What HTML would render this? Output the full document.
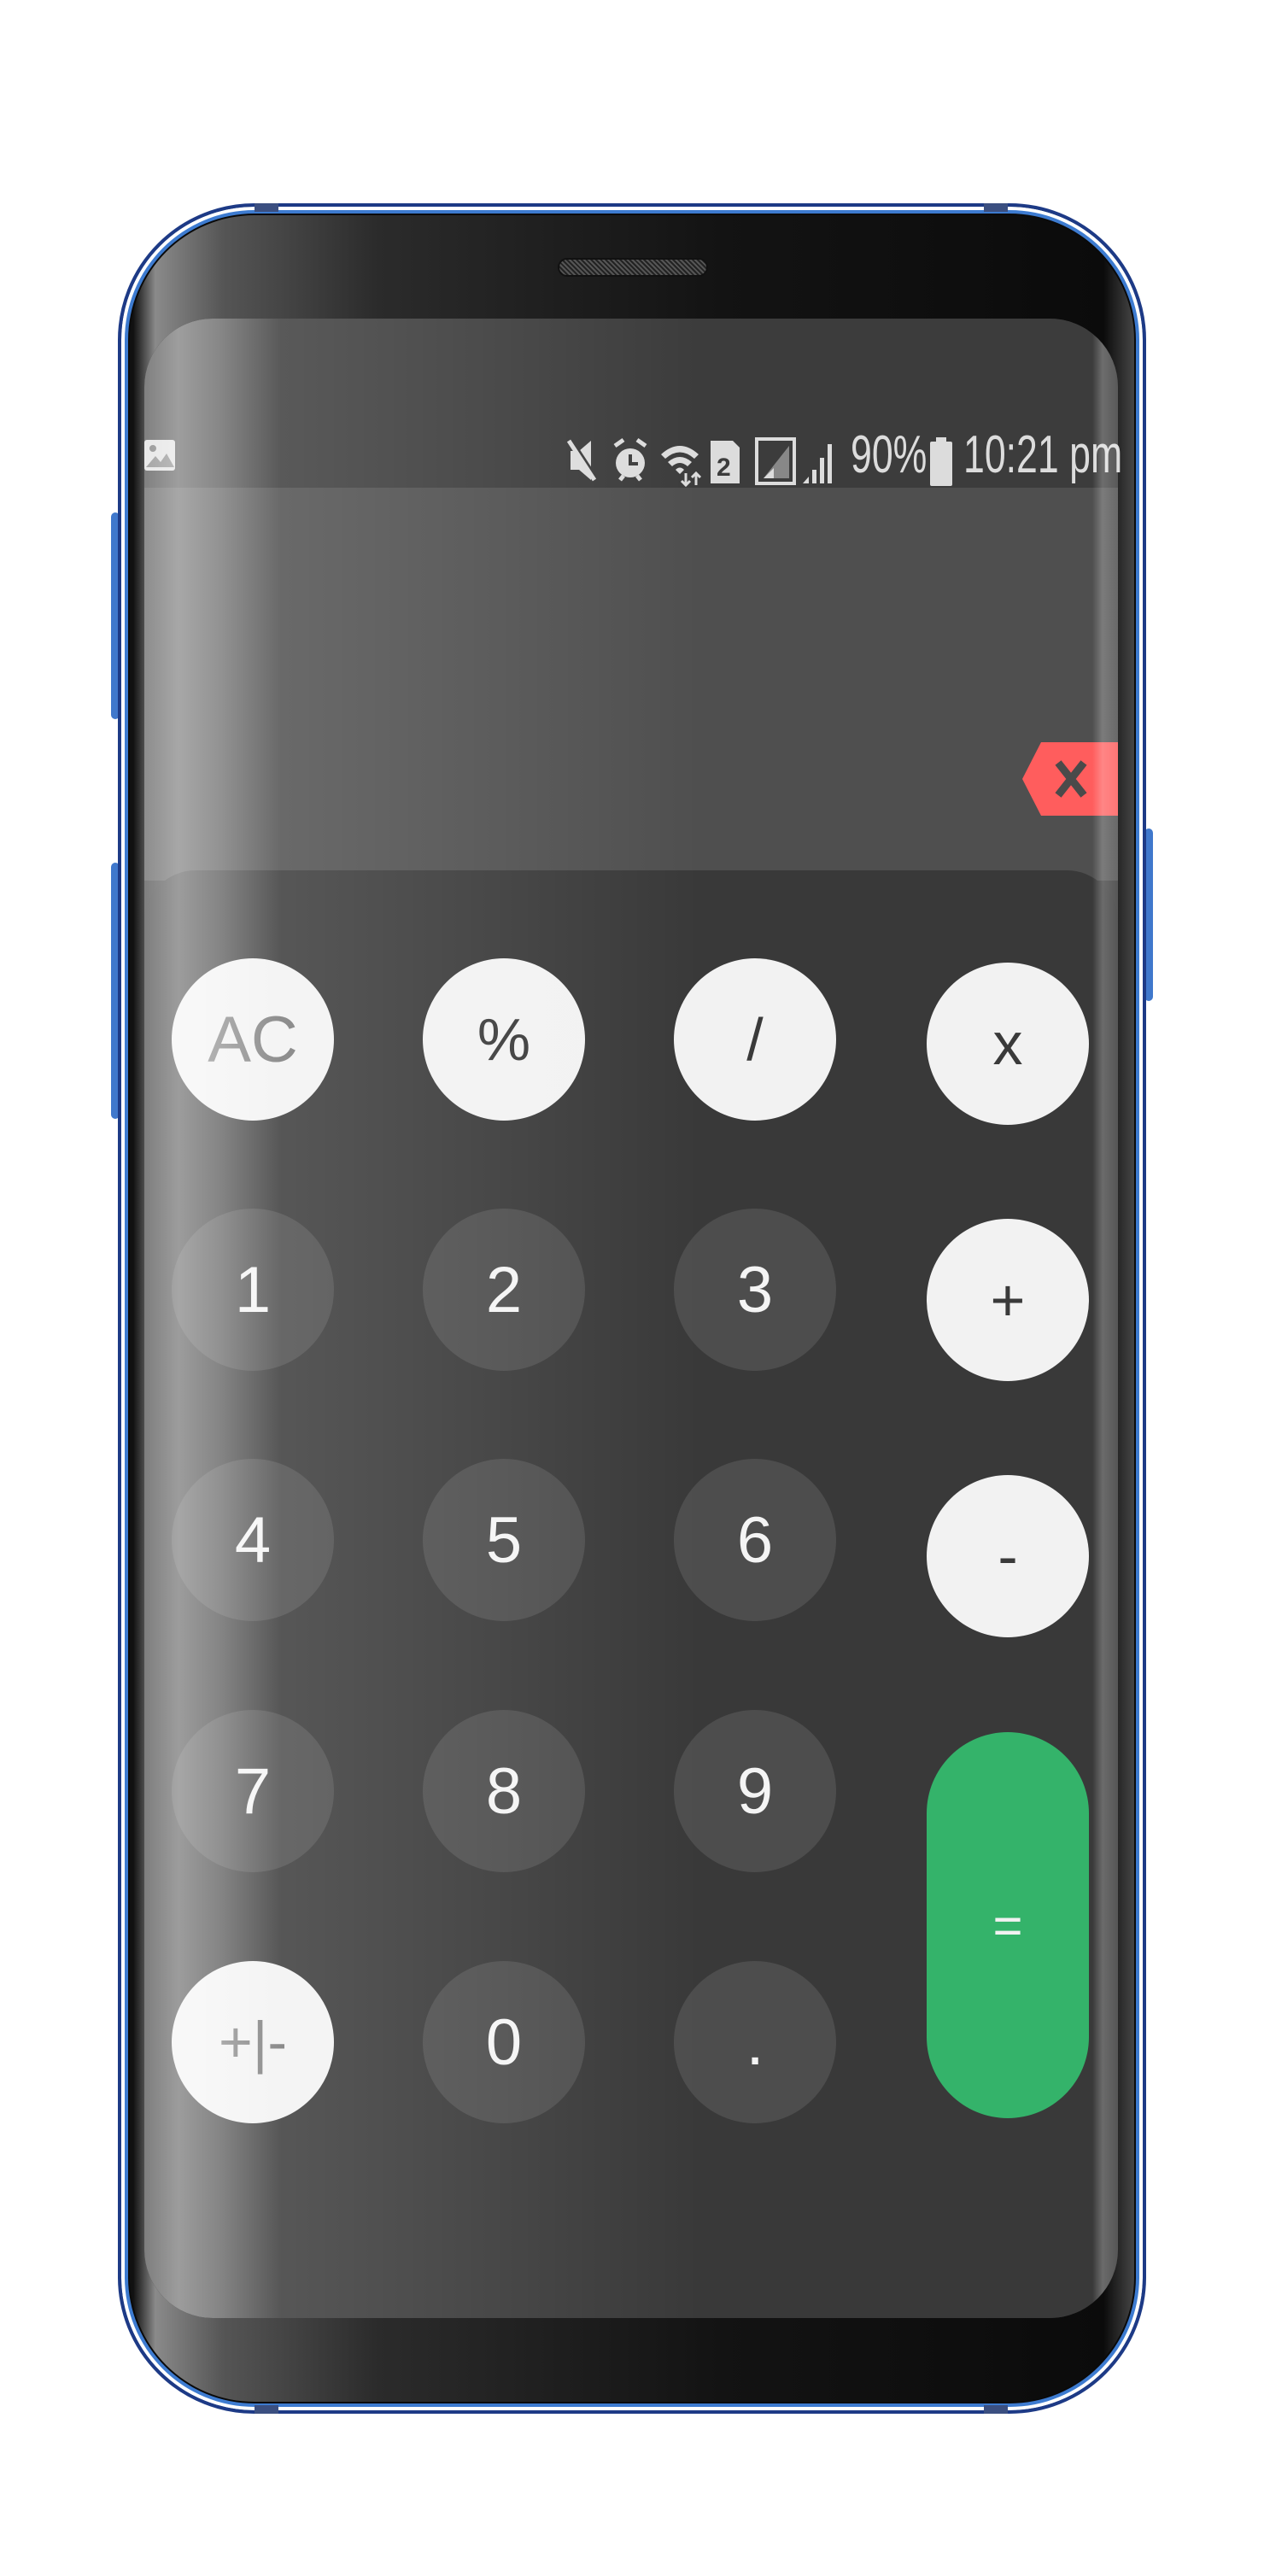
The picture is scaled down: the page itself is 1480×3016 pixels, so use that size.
<!DOCTYPE html>
<html><head><meta charset="utf-8"><style>
*{margin:0;padding:0;box-sizing:border-box}
body{width:1480px;height:3016px;background:#fff;position:relative;overflow:hidden;font-family:"Liberation Sans",sans-serif}
.abs{position:absolute}
.phone{left:138px;top:238px;width:1204px;height:2588px;border-radius:160px;border:4px solid #1d3a86;
 box-shadow:inset 0 0 0 4px #fff,inset 0 0 0 8px #3d7bd0,inset 0 0 0 10px #0a0a0a;
 background:linear-gradient(to right,#111 0,#111 14px,#8a8a8a 40px,#555 120px,#2b2b2b 300px,#131313 700px,#0b0b0b 1150px,#444 1185px,#050505 1200px)}
.side{background:#3f78cc;border-radius:6px}
.cap{background:#3b4f80}
.screen{left:169px;top:373px;width:1140px;height:2341px;border-radius:80px;overflow:hidden;background:#3a3a3a}
.status{left:0;top:0;width:1140px;height:198px;background:#3c3c3c}
.display{left:0;top:198px;width:1140px;height:460px;background:#4f4f4f}
.pad{left:0;top:646px;width:1140px;height:1700px;background:#393939;border-radius:60px 60px 0 0}
.ov{left:0;top:0;width:1140px;height:2341px;pointer-events:none;
 background:linear-gradient(to right,rgba(255,255,255,.35) 0,rgba(255,255,255,.5) 40px,rgba(255,255,255,.38) 90px,rgba(255,255,255,.15) 160px,rgba(255,255,255,.08) 400px,rgba(255,255,255,0) 650px,rgba(255,255,255,0) 1110px,rgba(255,255,255,.25) 1122px,rgba(255,255,255,.15) 1140px)}
.b{position:absolute;width:190px;height:190px;border-radius:50%;display:flex;align-items:center;justify-content:center;font-size:76px;color:#f4f4f4}
.n{background:rgba(255,255,255,.1)}
.w{background:#f2f2f2;color:#3a3a3a;font-size:70px}
.st{color:#dcdcdc;font-size:62px;line-height:62px;top:502px;transform:scaleX(.72);transform-origin:left;white-space:nowrap}
</style></head><body>
<div class="abs side" style="left:130px;top:600px;width:10px;height:242px"></div>
<div class="abs side" style="left:130px;top:1010px;width:10px;height:300px"></div>
<div class="abs side" style="left:1340px;top:970px;width:10px;height:202px"></div>
<div class="abs phone"></div>
<div class="abs cap" style="left:298px;top:238px;width:28px;height:10px"></div>
<div class="abs cap" style="left:1152px;top:238px;width:28px;height:10px"></div>
<div class="abs cap" style="left:298px;top:2816px;width:28px;height:10px"></div>
<div class="abs cap" style="left:1152px;top:2816px;width:28px;height:10px"></div>
<div class="abs" style="left:653px;top:302px;width:176px;height:22px;border-radius:11px;background:repeating-linear-gradient(45deg,#555 0 2px,#222 2px 4px);border:2px solid #111"></div>

<div class="abs screen">
 <div class="abs status"></div>
 <div class="abs display"></div>
 <div class="abs pad"></div>
 <svg class="abs" style="left:1028px;top:496px" width="112" height="86" viewBox="0 0 112 86"><path d="M22 0H112V86H22L0 43Z" fill="#ff5d5d"/><path d="M42 24L72 62M72 24L42 62" stroke="#4a4a4a" stroke-width="9"/></svg>
</div>

<!-- status bar -->
<svg class="abs" style="left:168px;top:514px" width="38" height="38" viewBox="0 0 38 38"><rect x="1" y="1" width="36" height="36" rx="3" fill="#ddd"/><circle cx="11" cy="11" r="4" fill="#666"/><path d="M3 33L14 20L20 27L27 17L36 33Z" fill="#777"/></svg>
<svg class="abs" style="left:660px;top:510px" width="322" height="60" viewBox="0 0 322 60">
 <g fill="#dcdcdc">
 <path d="M8 18H18L32 6V52L18 40H8Z"/><path d="M8 6L38 52" stroke="#3c3c3c" stroke-width="7"/><path d="M6 6L36 52" stroke="#dcdcdc" stroke-width="5"/>
 <circle cx="78" cy="32" r="17"/><path d="M60 12L70 5M96 12L86 5M66 52L70 47M90 52L86 47" stroke="#dcdcdc" stroke-width="5"/><path d="M78 22V33H87" stroke="#3c3c3c" stroke-width="4" fill="none"/>
 <path d="M114 22Q136 2 158 22L153 27Q136 12 119 27ZM122 31Q136 19 150 31L145 36Q136 28 127 36ZM131 40Q136 35 141 40L136 45Z"/>
 <path d="M143 44V58M138 53L143 58L148 53M155 58V44M150 49L155 44L160 49" stroke="#dcdcdc" stroke-width="3" fill="none"/>
 <path d="M172 6H198L206 14V56H172Z"/><text x="179" y="47" font-family="Liberation Sans" font-weight="bold" font-size="30" fill="#3c3c3c">2</text>
 <path d="M226 4H270V56H226Z" fill="none" stroke="#dcdcdc" stroke-width="4"/><path d="M234 50L264 12V50Z" fill="#888"/><path d="M234 50L246 38V50Z" fill="#dcdcdc"/>
 <path d="M280 56L287 48V56ZM291 56V40H296V56ZM300 56V26H305V56ZM309 56V10H314V56Z"/>
 </g></svg>
<div class="abs st" style="left:996px">90%</div>
<svg class="abs" style="left:1088px;top:512px" width="28" height="57" viewBox="0 0 28 57"><rect x="8" y="0" width="12" height="6" fill="#dcdcdc"/><rect x="1" y="5" width="26" height="52" rx="2" fill="#dcdcdc"/></svg>
<div class="abs st" style="left:1128px">10:21 pm</div>

<!-- keys -->
<div class="b w" style="left:201px;top:1122px;color:#7a7a7a;font-size:76px">AC</div>
<div class="b w" style="left:495px;top:1122px">%</div>
<div class="b w" style="left:789px;top:1122px">/</div>
<div class="b w" style="left:1085px;top:1127px">x</div>
<div class="b n" style="left:201px;top:1415px">1</div>
<div class="b n" style="left:495px;top:1415px">2</div>
<div class="b n" style="left:789px;top:1415px">3</div>
<div class="b w" style="left:1085px;top:1427px">+</div>
<div class="b n" style="left:201px;top:1708px">4</div>
<div class="b n" style="left:495px;top:1708px">5</div>
<div class="b n" style="left:789px;top:1708px">6</div>
<div class="b w" style="left:1085px;top:1727px">-</div>
<div class="b n" style="left:201px;top:2002px">7</div>
<div class="b n" style="left:495px;top:2002px">8</div>
<div class="b n" style="left:789px;top:2002px">9</div>
<div class="abs" style="left:1085px;top:2028px;width:190px;height:452px;border-radius:95px;background:#34b36a;color:#f2f2f2;font-size:60px;display:flex;align-items:center;justify-content:center">=</div>
<div class="b w" style="left:201px;top:2296px;color:#777;font-size:68px">+|-</div>
<div class="b n" style="left:495px;top:2296px">0</div>
<div class="b n" style="left:789px;top:2296px">.</div>

<div class="abs" style="left:169px;top:373px;width:1140px;height:2341px;border-radius:80px;overflow:hidden;pointer-events:none"><div class="abs ov"></div></div>
</body></html>
